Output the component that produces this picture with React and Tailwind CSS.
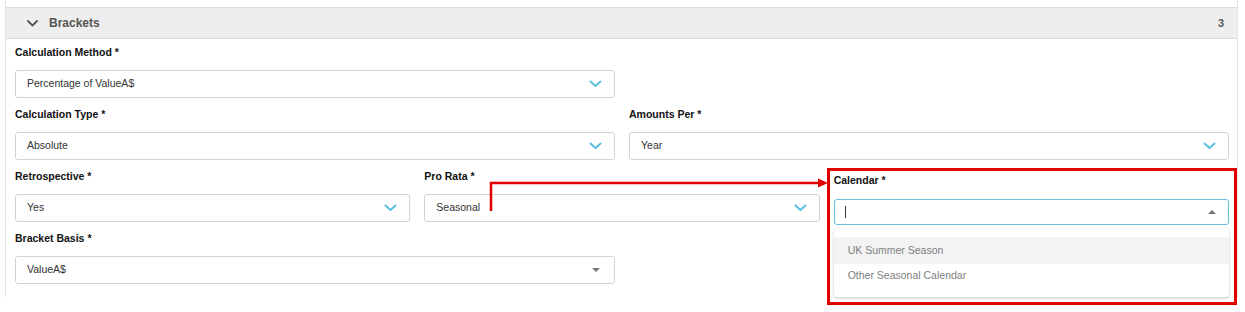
import React from 'react';

const font = { fontFamily: '"Liberation Sans", Arial, sans-serif' };

const Chevron = () => (
    <svg width="13" height="8" viewBox="0 0 13 8" fill="none">
        <path d="M1.5 1.5 L6.5 6 L11.5 1.5" stroke="#5bc0de" strokeWidth="2" strokeLinecap="round" strokeLinejoin="round" />
    </svg>
);

const Label = ({ children }) => (
    <div className="h-4 leading-4 text-[10.5px] font-bold text-[#111] mb-[10px]">{children}</div>
);

// plain select box with the blue chevron on the right
const SelectBox = ({ value, caret }) => (
    <div className="h-[28px] flex items-center justify-between border border-[#d4d4d4] rounded-[3px] bg-white pl-[11px] pr-[12px]">
        <span className="text-[10.5px] text-[#333]">{value}</span>
        {caret ? (
            <span className="w-0 h-0 border-l-[4px] border-r-[4px] border-t-[4px] border-l-transparent border-r-transparent border-t-[#777] mr-[2px]" />
        ) : (
            <Chevron />
        )}
    </div>
);

const Field = ({ label, value, caret }) => (
    <div>
        <Label>{label}</Label>
        <SelectBox value={value} caret={caret} />
    </div>
);

const App = () => {
    return (
        <div className="relative w-[1245px] h-[312px] bg-white overflow-hidden" style={font}>
            <div className="ml-[5px] w-[1233px] h-[297px] border-l border-r border-[#e2e2e2]">
                <div className="h-[7px]" />
                {/* section header */}
                <div className="h-[32px] flex items-center justify-between bg-[#eeeeee] border-t border-b border-[#dcdcdc] pl-[21px] pr-[13px]">
                    <div className="flex items-center gap-[11px]">
                        <svg width="11" height="7" viewBox="0 0 11 7" fill="none">
                            <path d="M1 1 L5.5 5.5 L10 1" stroke="#555" strokeWidth="1.8" strokeLinecap="round" strokeLinejoin="round" />
                        </svg>
                        <span className="text-[12px] font-bold text-[#555]">Brackets</span>
                    </div>
                    <span className="text-[11px] font-bold text-[#555]">3</span>
                </div>

                <div className="pl-[9px] pr-[8px] pt-[5px] flex flex-col gap-2">
                    <div className="grid grid-cols-2 gap-x-[14px]">
                        <Field label="Calculation Method *" value="Percentage of ValueA$" />
                    </div>
                    <div className="grid grid-cols-2 gap-x-[14px]">
                        <Field label="Calculation Type *" value="Absolute" />
                        <Field label="Amounts Per *" value="Year" />
                    </div>
                    <div className="grid grid-cols-3 gap-x-[14px]">
                        <Field label="Retrospective *" value="Yes" />
                        <Field label="Pro Rata *" value="Seasonal" />
                        <div className="relative h-[54px] pt-[4px]">
                            <div className="h-4 leading-4 text-[10.5px] font-bold text-[#111] mb-[11px]">Calendar *</div>
                            <div className="h-[26px] flex items-center justify-between border border-[#66c3dc] rounded-[3px] bg-white pl-[10px] pr-[12px]">
                                <span className="w-px h-[12px] bg-[#333]" />
                                <span className="w-0 h-0 border-l-[4px] border-r-[4px] border-b-[4px] border-l-transparent border-r-transparent border-b-[#777]" />
                            </div>
                            {/* open dropdown menu */}
                            <div className="absolute left-0 right-0 top-[61px] z-10 bg-white rounded-[3px] shadow-[0_1px_3px_rgba(0,0,0,0.25)] pt-[8px] pb-[9px]">
                                <div className="h-[27px] flex items-center bg-[#f3f3f3] pl-[14px] text-[10.5px] text-[#808080]">UK Summer Season</div>
                                <div className="h-[24px] flex items-center pl-[14px] text-[10.5px] text-[#808080]">Other Seasonal Calendar</div>
                            </div>
                        </div>
                    </div>
                    <div className="grid grid-cols-2 gap-x-[14px]">
                        <Field label="Bracket Basis *" value="ValueA$" caret />
                    </div>
                </div>
            </div>

            {/* red annotation box and arrow */}
            <div className="absolute left-[827px] top-[168px] w-[410px] h-[137px] border-[3px] border-[#e00000] z-20 pointer-events-none" />
            <svg className="absolute left-0 top-0 z-20 pointer-events-none" width="1245" height="312">
                <path d="M491 211 L491 183 L819 183" stroke="#e00000" strokeWidth="2.5" fill="none" />
                <path d="M818 178.5 L828 183 L818 187.5 Z" fill="#e00000" />
            </svg>
        </div>
    );
};

export default App;
